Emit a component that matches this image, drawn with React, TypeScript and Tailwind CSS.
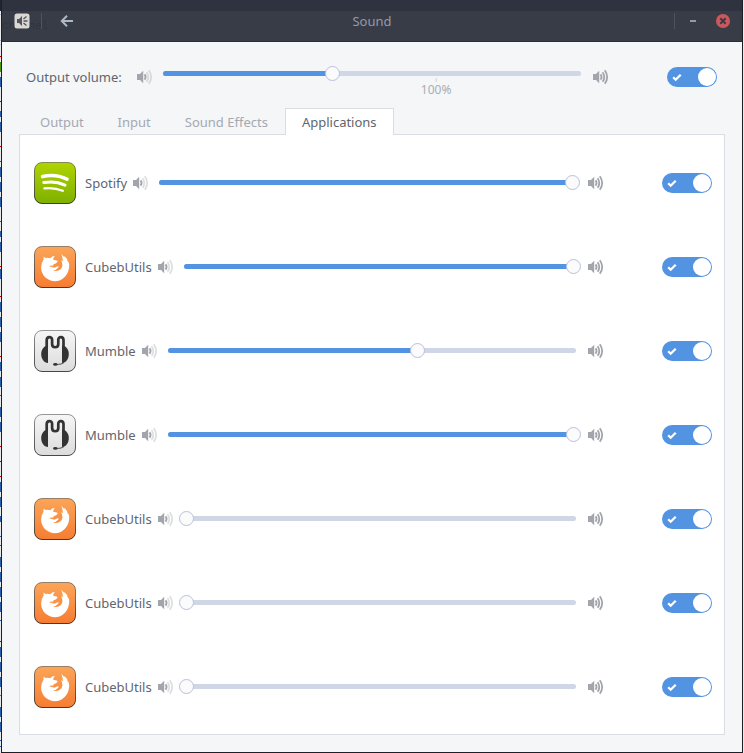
import { FC, useState } from 'react';
import { clsx } from 'clsx';

type AppKind = 'spotify' | 'firefox' | 'mumble';

const streams: { id: number; name: string; kind: AppKind; volume: number }[] = [
  { id: 1, name: 'Spotify', kind: 'spotify', volume: 99.7 },
  { id: 2, name: 'CubebUtils', kind: 'firefox', volume: 100 },
  { id: 3, name: 'Mumble', kind: 'mumble', volume: 61.4 },
  { id: 4, name: 'Mumble', kind: 'mumble', volume: 100 },
  { id: 5, name: 'CubebUtils', kind: 'firefox', volume: 0 },
  { id: 6, name: 'CubebUtils', kind: 'firefox', volume: 0 },
  { id: 7, name: 'CubebUtils', kind: 'firefox', volume: 0 },
];

const tabs = ['Output', 'Input', 'Sound Effects', 'Applications'];

// [y, height, colour] of the rows that show past the left edge of the window
const backdropRows: [number, number, string][] = [
  [14, 1, '#b9c4d6'], [40, 1, '#b9c4d6'], [44, 1, '#b9c4d6'], [56, 1, '#c00000'], [62, 10, '#4e9a06'],
  [77, 10, '#2a5ea8'], [101, 1, '#c00000'], [111, 6, '#2a5ea8'], [122, 10, '#2a5ea8'], [146, 1, '#c00000'],
  [161, 1, '#2a5ea8'], [167, 10, '#2a5ea8'], [182, 10, '#2a5ea8'], [197, 10, '#2a5ea8'], [221, 1, '#2a5ea8'],
  [231, 6, '#2a5ea8'], [242, 10, '#2a5ea8'], [266, 1, '#c00000'], [269, 10, '#2a5ea8'], [296, 1, '#c00000'],
  [302, 10, '#2a5ea8'], [317, 10, '#2a5ea8'], [332, 10, '#2a5ea8'], [356, 1, '#c00000'], [362, 9, '#2a5ea8'],
  [377, 10, '#2a5ea8'], [395, 1, '#2a5ea8'], [407, 10, '#2a5ea8'], [422, 10, '#2a5ea8'], [446, 1, '#c00000'],
  [461, 1, '#c00000'], [476, 1, '#c00000'], [482, 10, '#2a5ea8'], [497, 10, '#2a5ea8'], [516, 6, '#2a5ea8'],
  [536, 1, '#2a5ea8'], [545, 1, '#2a5ea8'], [557, 10, '#2a5ea8'], [572, 10, '#2a5ea8'], [587, 10, '#2a5ea8'],
  [602, 10, '#2a5ea8'], [620, 1, '#2a5ea8'], [641, 1, '#c00000'], [647, 10, '#2a5ea8'], [662, 10, '#2a5ea8'],
  [677, 10, '#2a5ea8'], [695, 1, '#4e9a06'], [707, 10, '#2a5ea8'], [722, 10, '#2a5ea8'], [740, 1, '#2a5ea8'],
  [746, 1, '#2a5ea8'],
];

const Backdrop: FC = () => (
  <svg aria-hidden="true" width="1" height="753" className="absolute top-0 left-0" shapeRendering="crispEdges">
    <rect width="1" height="11" fill="#23262f" />
    {backdropRows.map(([y, height, fill]) => (
      <rect key={y} y={y} width="1" height={height} fill={fill} />
    ))}
  </svg>
);

const SpeakerIcon: FC<{ low?: boolean }> = ({ low }) => (
  <svg aria-hidden="true" viewBox="0 0 16 16" className="size-4 shrink-0 text-[#a3a5ac]" fill="none">
    <path d="M0 5h3l3.2-3.2v12.4L3 11H0z" fill="currentColor" />
    <path d="M7.6 5.4q2 2.6 0 5.2" stroke="currentColor" strokeWidth="1.8" />
    <g stroke="currentColor" strokeWidth="1.8" opacity={low ? 0.35 : 1}>
      <path d="M9.6 3.2q3.4 4.8 0 9.6" />
      <path d="M11.8 1.2q4.8 6.8 0 13.6" />
    </g>
  </svg>
);

const AppIcon: FC<{ kind: AppKind }> = ({ kind }) => {
  const [top, bottom] = {
    spotify: ['#b0d400', '#7fb000'],
    firefox: ['#fba558', '#f57d33'],
    mumble: ['#f6f6f6', '#dcdcdc'],
  }[kind];

  return (
    <svg aria-hidden="true" viewBox="0 0 42 42" className="size-[42px] shrink-0" fill="none">
      <defs>
        <linearGradient id={`face-${kind}`} x1="0" y1="0" x2="0" y2="1">
          <stop offset="0" stopColor={top} />
          <stop offset="1" stopColor={bottom} />
        </linearGradient>
        <linearGradient id={`rim-${kind}`} x1="0" y1="0" x2="0" y2="1">
          <stop offset="0" stopOpacity="0.4" />
          <stop offset="1" stopOpacity="0.7" />
        </linearGradient>
      </defs>
      <rect x="0.5" y="0.5" width="41" height="41" rx="7.5" fill={`url(#face-${kind})`} />
      <rect x="0.5" y="0.5" width="41" height="41" rx="7.5" stroke={`url(#rim-${kind})`} />
      {kind === 'spotify' && (
        <g stroke="#fff" strokeLinecap="round">
          <path d="M8.6 14.6q13-3 24.4 2.6" strokeWidth="3.6" />
          <path d="M9.8 20.6q11.6-2 21.2 2.6" strokeWidth="3" />
          <path d="M10.4 26.4q9.6-1.2 18.4 2.4" strokeWidth="2.3" />
        </g>
      )}
      {kind === 'firefox' && (
        <path
          fill="#fff"
          d="M9.8 10.6Q10.4 11.900 12 12Q14.500 11.600 16.200 12.300Q18 10.200 21 9.800Q19 11.600 19.200 13.800L22.600 14.500Q24.200 15 23.200 16.200Q21.800 17.500 19.600 18.300L19.200 19.800Q17 18.800 15 20.600Q17 20.200 18.600 21.300Q20.600 22 22.400 20.700Q25 19.800 24.600 21.200Q22.600 24.200 19 24.300C24 26.200 28.600 23.200 28.400 18.500Q28.200 15.800 26.800 14L28.800 15.200Q29 12 27.200 7.600Q29 9.800 30.600 11.600L30.300 9.800Q33.600 12.400 34.200 17L34.700 15.200Q35.800 19.500 34.600 24C32.800 30.600 27.400 35.200 21 35.200C13.300 35.200 7.100 29 7.100 21.500Q7.100 17 9.600 13.800Q9.300 12 9.800 10.600z"
        />
      )}
      {kind === 'mumble' && (
        <>
          <path d="M14 15.5V33c-4 0-6.800-4.200-6.800-9 0-4.300 2.800-8.500 6.800-8.500z" fill="#333" />
          <path d="M28 15.5V33c4 0 6.800-4.200 6.800-9 0-4.300-2.800-8.500-6.800-8.500z" fill="#333" />
          <path
            d="M12.700 17V10.200c0-4 5.400-4 5.400-.5V14c0 4.300 6.200 4.300 6.200 0V9.700c0-3.500 5.200-3.500 5.200.5V17"
            stroke="#333"
            strokeWidth="2.7"
          />
          <path d="M22 34.400c3.500.1 6.500-.4 8-1.900" stroke="#333" strokeWidth="0.9" />
          <ellipse cx="21.300" cy="34.400" rx="2.200" ry="1.400" fill="#333" />
        </>
      )}
    </svg>
  );
};

interface SliderProps {
  label: string;
  value: number;
  max?: number;
  onChange: (value: number) => void;
}

const Slider: FC<SliderProps> = ({ label, value, max = 100, onChange }) => (
  <div className="grid items-center">
    <div className="col-start-1 row-start-1 mx-[5px] h-[5px] rounded-full bg-[#cfd6e6]">
      <div className="h-full rounded-full bg-[#5294e2]" style={{ width: `${(value / max) * 100}%` }} />
    </div>
    <input
      type="range"
      aria-label={label}
      min={0}
      max={max}
      step="any"
      value={value}
      onChange={(e) => onChange(Number(e.target.value))}
      className="col-start-1 row-start-1 h-[15px] w-full appearance-none bg-transparent [&::-webkit-slider-thumb]:size-[15px] [&::-webkit-slider-thumb]:appearance-none [&::-webkit-slider-thumb]:rounded-full [&::-webkit-slider-thumb]:border [&::-webkit-slider-thumb]:border-[#b9c0dc] [&::-webkit-slider-thumb]:bg-[#fbfbfc]"
    />
  </div>
);

const Switch: FC<{ label: string }> = ({ label }) => {
  const [on, setOn] = useState(true);

  return (
    <label className="relative ml-[58px] h-5 w-[50px] shrink-0">
      <input
        type="checkbox"
        role="switch"
        aria-label={label}
        checked={on}
        onChange={() => setOn(!on)}
        className="block h-5 w-[50px] appearance-none rounded-full bg-[#cfd6e6] checked:bg-[#5294e2]"
      />
      {on && (
        <svg aria-hidden="true" viewBox="0 0 10 10" className="absolute top-[5px] left-[5px] size-2.5" fill="none">
          <path d="M1.200 5.200l2.500 2.500 5-5" stroke="#fff" strokeWidth="2.300" />
        </svg>
      )}
      <span className={clsx('absolute top-px size-[18px] rounded-full bg-white', on ? 'right-px' : 'left-px')} />
    </label>
  );
};

const TitleBar: FC = () => (
  <header className="relative grid h-[42px] grid-cols-[1fr_auto_1fr] items-center border-b border-[#2b2e39] bg-[linear-gradient(#2f333f_11px,#383c47_11px)] px-3">
    <span
      aria-hidden="true"
      className="absolute top-[18px] left-0 font-['Liberation_Mono',monospace] text-[11px] leading-4 text-[#30343e]"
    >
      Channel
    </span>
    <div className="relative flex items-center">
      <svg aria-hidden="true" viewBox="0 0 16 16" className="size-4" fill="none">
        <rect x="0.500" y="0.500" width="15" height="15" rx="2.500" fill="#d9d8d4" />
        <path d="M3 6h2l3-3v10L5 10H3z" fill="#55565a" />
        <path d="M9.500 8h4M9.500 6l3-2.500M9.500 10l3 2.500" stroke="#55565a" strokeWidth="1.300" />
      </svg>
      <span className="ml-[11px] h-4 w-px bg-[#50535e]" />
      <button type="button" aria-label="Back" className="ml-[18px] text-[#afb8c6]">
        <svg aria-hidden="true" viewBox="0 0 14 14" className="size-3.5" fill="none">
          <path d="M13 7H2.500M7 1.700L1.800 7 7 12.300" stroke="currentColor" strokeWidth="2" />
        </svg>
      </button>
    </div>
    <h1 className="text-[13px] leading-5 text-[#949aa8]">Sound</h1>
    <div className="flex items-center justify-end">
      <span className="h-4 w-px bg-[#50535e]" />
      <button type="button" aria-label="Minimize" className="flex h-4 w-[36px] items-center justify-center">
        <span className="h-0.5 w-1.5 bg-[#9499a3]" />
      </button>
      <button type="button" aria-label="Close" className="ml-[5px] text-[#383c47]">
        <svg aria-hidden="true" viewBox="0 0 14 14" className="size-3.5">
          <circle cx="7" cy="7" r="7" fill="#cc575d" />
          <path d="M4.300 4.300l5.400 5.400M9.700 4.300L4.300 9.700" stroke="currentColor" strokeWidth="2" />
        </svg>
      </button>
    </div>
  </header>
);

const StreamRow: FC<{ name: string; kind: AppKind; initial: number }> = ({ name, kind, initial }) => {
  const [volume, setVolume] = useState(initial);

  return (
    <li className="flex h-[84px] items-center">
      <AppIcon kind={kind} />
      <span className="ml-[9px]">{name}</span>
      <span className="ml-1.5">
        <SpeakerIcon low />
      </span>
      <div className="mr-[7px] mb-0.5 ml-[5px] min-w-0 flex-1">
        <Slider label={`${name} volume`} value={volume} onChange={setVolume} />
      </div>
      <SpeakerIcon />
      <Switch label={`${name} enabled`} />
    </li>
  );
};

export default function App() {
  const [output, setOutput] = useState(62);
  const [active, setActive] = useState('Applications');

  return (
    <div className="relative flex min-h-screen bg-[#e9eaec] px-px font-['Noto_Sans',sans-serif] text-[13px] leading-5 text-[#5f6570]">
      <Backdrop />
      <div className="flex min-w-0 flex-1 flex-col border-x border-b border-[#1c1f27] bg-[#f4f6f8]">
        <TitleBar />
        <main className="flex flex-1 flex-col pb-[17px]">
          <div className="flex h-[66px] items-center pt-1 pr-[25px] pl-6">
            <span>Output volume:</span>
            <span className="ml-[15px]">
              <SpeakerIcon low />
            </span>
            <div className="relative mr-[7px] ml-[5px] h-[22px] min-w-0 flex-1">
              <Slider label="Output volume" value={output} max={153} onChange={setOutput} />
              <div className="absolute top-3 left-[65%] flex -translate-x-1/2 flex-col items-center text-[12px] leading-4 text-[#a9adb5]">
                <span className="h-1 w-px bg-[#cfd3da]" />
                100%
              </div>
            </div>
            <SpeakerIcon />
            <Switch label="Output enabled" />
          </div>
          <div role="tablist" className="relative z-10 ml-[21px] flex h-[27px]">
            {tabs.map((tab) => (
              <button
                key={tab}
                type="button"
                role="tab"
                aria-selected={tab === active}
                onClick={() => setActive(tab)}
                className={clsx(
                  'border border-b-0 px-4',
                  tab === active ? 'border-[#dadee4] bg-white' : 'border-transparent text-[#a5a9b1]',
                )}
              >
                {tab}
              </button>
            ))}
          </div>
          <ul className="mx-[17px] -mt-px flex-1 border border-[#dadee4] bg-white pt-1.5 pr-3 pb-[5px] pl-3.5">
            {streams.map((stream) => (
              <StreamRow key={stream.id} name={stream.name} kind={stream.kind} initial={stream.volume} />
            ))}
          </ul>
        </main>
      </div>
    </div>
  );
}
